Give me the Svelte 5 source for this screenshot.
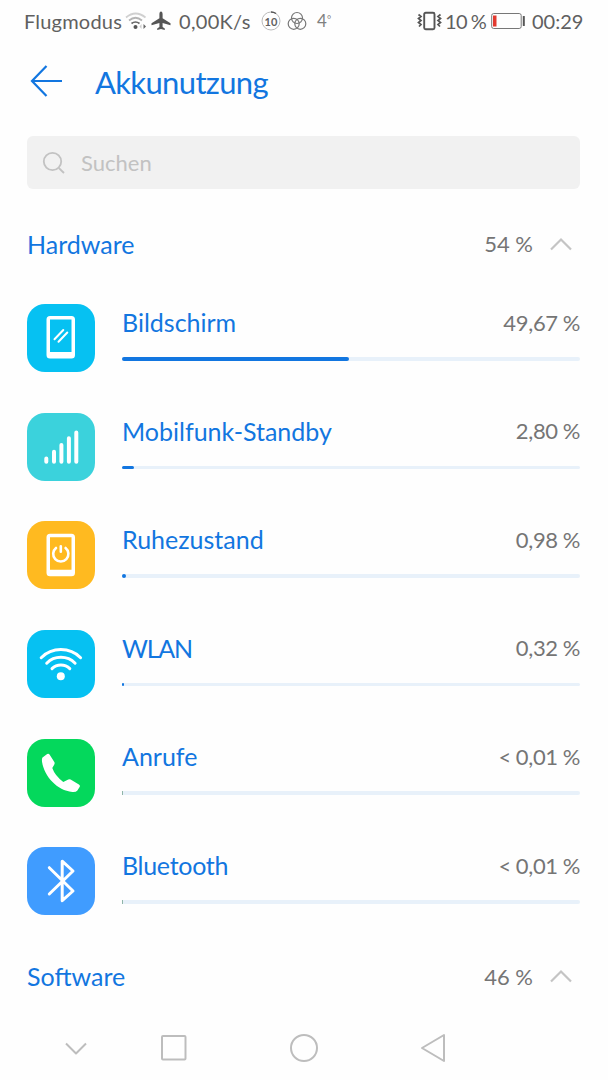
<script>
    const hardware = [
        { icon: 'screen', name: 'Bildschirm', value: '49,67 %', fill: 49.67 },
        { icon: 'signal', name: 'Mobilfunk-Standby', value: '2,80 %', fill: 2.7 },
        { icon: 'idle', name: 'Ruhezustand', value: '0,98 %', fill: 0.98 },
        { icon: 'wlan', name: 'WLAN', value: '0,32 %', fill: 0.4 },
        { icon: 'call', name: 'Anrufe', value: '< 0,01 %', fill: 0 },
        { icon: 'bluetooth', name: 'Bluetooth', value: '< 0,01 %', fill: 0 }
    ];
</script>

{#snippet phone()}
    <path d="M23 12h21.500a3.500 3.500 0 0 1 3.500 3.500v35.500a3.500 3.500 0 0 1-3.500 3.500h-21.500a3.500 3.500 0 0 1-3.500-3.500v-35.500a3.500 3.500 0 0 1 3.500-3.500zM23 15.500v32.500h21.500v-32.500z" fill="#fff" fill-rule="evenodd" />
{/snippet}

{#snippet group(title, total)}
    <div class="group">
        <h2>{title}</h2>
        <span class="total">{total}</span>
        <svg width="24" height="14" viewBox="0 0 24 14"><path d="M2 12.500 12 2.500l10 10" fill="none" stroke="#c4c4c4" stroke-width="2.200" /></svg>
    </div>
{/snippet}

<div class="page">
    <div class="status">
        <span class="mode">Flugmodus</span>
        <svg class="wifi" width="22" height="20" viewBox="0 0 22 20" fill="none" stroke-width="1.700">
            <path d="M1 6.500q9.500-8 19.500 0" stroke="#d0d0d0" />
            <path d="M4 9.500q6.500-5.500 13 0" stroke="#b5b5b5" />
            <path d="M6.500 12.500q4-3 8 0" stroke="#666" />
            <circle cx="10.500" cy="16" r="2" fill="#555" />
            <path d="M16.500 13v5l-2-2.500z" fill="#ccc" />
            <path d="M18.500 13v5l2.500-2.500z" fill="#666" />
        </svg>
        <svg class="plane" width="20" height="20" viewBox="0 0 20 20">
            <path d="M10 .500c1 0 1.600 1.200 1.600 2.700v4l7.900 5v2l-7.900-2.300v4l2.200 1.700v1.500L10 18l-3.800 1.100v-1.500l2.200-1.700v-4L.500 14.200v-2l7.900-5v-4C8.400 1.700 9 .500 10 .500z" fill="#555" />
        </svg>
        <span class="speed">0,00K/s</span>
        <span class="ring">
            <svg width="20" height="20" viewBox="0 0 20 20" fill="none">
                <circle cx="10" cy="10" r="9" stroke="#bbb" />
                <path d="M10 1a9 9 0 0 1 5 1.500" stroke="#555" stroke-width="1.400" />
            </svg>
            <b>10</b>
        </span>
        <svg class="rings" width="20" height="20" viewBox="0 0 20 20" fill="none" stroke="#777" stroke-width="1.200">
            <circle cx="10" cy="7" r="5.500" />
            <circle cx="6.700" cy="12.800" r="5.500" />
            <circle cx="13.300" cy="12.800" r="5.500" />
        </svg>
        <span class="temp">4<i>°</i></span>
        <svg class="vibrate" width="25" height="20" viewBox="0 0 25 20" fill="none" stroke="#555">
            <rect x="7.200" y="1.700" width="10.300" height="16.500" rx="1.500" stroke-width="1.900" />
            <path d="M1.500 3.500l2.500 2-2.500 2 2.500 2-2.500 2 2.500 2-2 2M23.500 3.500l-2.500 2 2.500 2-2.500 2 2.500 2-2.500 2 2 2" stroke-width="1.700" />
        </svg>
        <span class="charge">10 %</span>
        <svg class="battery" width="35" height="18" viewBox="0 0 35 18">
            <rect x=".700" y="1.500" width="29.500" height="15" rx="2" fill="none" stroke="#777" />
            <rect x="2" y="3.500" width="3.500" height="11" fill="#e33a30" />
            <rect x="31.800" y="4" width="2" height="10" rx=".500" fill="#555" />
        </svg>
        <span class="clock">00:29</span>
    </div>

    <header>
        <svg width="32" height="32" viewBox="0 0 32 32" fill="none" stroke="#1276e0" stroke-width="2.200">
            <path d="M16.500 1 2 16l14.500 15M2 16h30" />
        </svg>
        <h1>Akkunutzung</h1>
    </header>

    <div class="search">
        <svg width="24" height="24" viewBox="0 0 24 24" fill="none" stroke="#c2c2c2" stroke-width="1.800">
            <circle cx="10.500" cy="10.500" r="8.700" />
            <path d="m16.800 17 5.200 5" />
        </svg>
        <span>Suchen</span>
    </div>

    {@render group('Hardware', '54 %')}

    {#each hardware as item}
        <div class="row">
            <svg class="icon {item.icon}" viewBox="0 0 68 68" fill="none" stroke="#fff" stroke-width="3" stroke-linecap="round" stroke-linejoin="round">
                {#if item.icon === 'screen'}
                    <g stroke="none">{@render phone()}</g>
                    <path d="m27.500 35.300 8.800-9.300M31.500 37.700l8.800-9.200" stroke-width="2" />
                {:else if item.icon === 'signal'}
                    <path d="M19.300 45.500v3.200M27 38.700v10M34.400 32v16.700M41.900 25.300v23.400M49.300 19.500v29.200" stroke-width="4" />
                {:else if item.icon === 'idle'}
                    <g stroke="none" transform="translate(0 .800)">{@render phone()}</g>
                    <path d="M29 27a7.600 7.600 0 1 0 9.600 0M33.800 25.300v5.500" stroke-width="2.600" />
                {:else if item.icon === 'wlan'}
                    <path d="M14.200 27.700a28 28 0 0 1 39.400 0M19.700 33.200a20 20 0 0 1 28.400 0M25 38.600a12.500 12.500 0 0 1 17.800 0" />
                    <circle cx="33.800" cy="46.200" r="4" fill="#fff" stroke="none" />
                {:else if item.icon === 'call'}
                    <path d="m15.500 18.500 4.700-3.500q1.500-.800 2.500.700l4.600 7.300q.700 1.200 0 2.400l-2 3.700q2.500 7.500 11 14l5-2.600q1.100-.700 2.300.100l8.300 4.900q1.600 1 .700 2.500l-2.200 3.500q-1.500 1.800-5 1.500C30 51.500 17 37 15 22.500q-.300-3 .500-4z" fill="#fff" stroke="none" />
                {:else}
                    <path d="M22.300 20.700 46 44 35.200 53.700V14.200L46 24 22.300 47" />
                {/if}
            </svg>
            <div class="detail">
                <div class="line">
                    <span class="name {item.icon}-name">{item.name}</span>
                    <span class="value">{item.value}</span>
                </div>
                <div class="bar"><div class="fill" class:tiny={item.fill === 0} style="width: {item.fill}%"></div></div>
            </div>
        </div>
    {/each}

    {@render group('Software', '46 %')}

    <nav>
        <svg width="24" height="30" viewBox="0 0 24 30"><path d="m2 10.500 10 10 10-10" /></svg>
        <svg width="26" height="30" viewBox="0 0 26 30"><rect x="1" y="3" width="23.500" height="23.500" rx="1" /></svg>
        <svg width="30" height="30" viewBox="0 0 30 30"><circle cx="15" cy="15" r="13" /></svg>
        <svg width="26" height="30" viewBox="0 0 26 30"><path d="M24 2v26L2 15z" /></svg>
    </nav>
</div>

<style>
    :global(body) {
        background: #fff;
    }

    .page {
        width: 608px;
        height: 1080px;
        display: flex;
        flex-direction: column;
        overflow: hidden;
        background: #fefefe;
        font-family: Lato, sans-serif;
        color: #757575;
        font-size: 22px;
        white-space: nowrap;
    }

    svg {
        display: block;
        flex: none;
    }

    h1, h2 {
        margin: 0;
        font-weight: 400;
        color: #1276e0;
    }

    .status {
        height: 42px;
        flex: none;
        display: flex;
        align-items: center;
        padding: 0 24px;
        color: #606060;
        font-size: 20px;
    }

    .mode {
        width: 101px;
        letter-spacing: 0.2px;
    }

    .plane {
        margin-left: 4px;
    }

    .speed {
        width: 72px;
        margin-left: 8px;
        letter-spacing: 0.3px;
    }

    .ring {
        display: grid;
        place-items: center;
        margin-left: 10px;
    }

    .ring > * {
        grid-area: 1 / 1;
    }

    .ring b {
        font-size: 11px;
    }

    .rings {
        margin-left: 6px;
    }

    .temp {
        font-size: 17px;
        margin: -2px 0 0 10px;
        color: #808080;
    }

    .temp i {
        font-size: 10px;
        font-style: normal;
        vertical-align: 4px;
    }

    .vibrate {
        margin-left: auto;
    }

    .charge {
        width: 42px;
        margin-left: 3px;
        letter-spacing: -0.5px;
        word-spacing: -1px;
    }

    .battery {
        margin-left: 4px;
    }

    .clock {
        width: 52px;
        margin-left: 6px;
    }

    header {
        height: 94px;
        flex: none;
        box-sizing: border-box;
        display: flex;
        align-items: center;
        gap: 33px;
        padding: 0 30px 16px;
    }

    h1 {
        padding-top: 2px;
        font-size: 31px;
        letter-spacing: -0.65px;
    }

    .search {
        height: 53px;
        flex: none;
        display: flex;
        align-items: center;
        gap: 15px;
        margin: 0 28px 14px 27px;
        padding-left: 15px;
        box-sizing: border-box;
        border-radius: 6px;
        background: #f1f1f1;
        color: #c2c2c2;
    }

    .group {
        height: 81px;
        flex: none;
        display: flex;
        align-items: center;
        padding: 0 35px 0 27px;
    }

    h2 {
        flex: 1;
        font-size: 25px;
    }

    .total {
        margin-right: 16px;
    }

    .row {
        height: 108.600px;
        flex: none;
        display: flex;
        align-items: center;
        gap: 27px;
        padding: 0 28px 0 27px;
    }

    .icon {
        width: 68px;
        height: 68px;
        border-radius: 18px;
    }

    .screen, .wlan {
        background: #06c1f2;
    }

    .signal {
        background: #3bd2dc;
    }

    .idle {
        background: #ffba20;
    }

    .call {
        background: #04d85c;
    }

    .bluetooth {
        background: #409cff;
    }

    .detail {
        flex: 1;
        padding-bottom: 11px;
    }

    .line {
        height: 34px;
        display: flex;
        align-items: center;
        justify-content: space-between;
        margin-bottom: 18px;
    }

    .name {
        font-size: 25px;
        color: #1276e0;
    }

    .wlan-name {
        letter-spacing: -1.2px;
    }

    .bluetooth-name {
        letter-spacing: -0.3px;
    }

    .wlan-name, .bluetooth-name {
        background: none;
    }

    .value {
        letter-spacing: -0.3px;
        word-spacing: -0.5px;
    }

    .bar {
        height: 3.500px;
        border-radius: 2px;
        background: #e8f1fa;
    }

    .fill {
        height: 100%;
        border-radius: 2px;
        background: #1276e0;
    }

    .tiny {
        min-width: 1px;
        border-radius: 0;
        background: #8fb5a8;
    }

    nav {
        height: 62px;
        flex: none;
        display: flex;
        align-items: center;
        padding-left: 64px;
    }

    nav svg {
        fill: none;
        stroke: #bdbdbd;
        stroke-width: 2;
        stroke-linejoin: round;
    }

    nav svg:nth-child(2) {
        margin-left: 73px;
    }

    nav svg:nth-child(3) {
        margin-left: 102px;
    }

    nav svg:nth-child(4) {
        margin-left: 101px;
    }
</style>
